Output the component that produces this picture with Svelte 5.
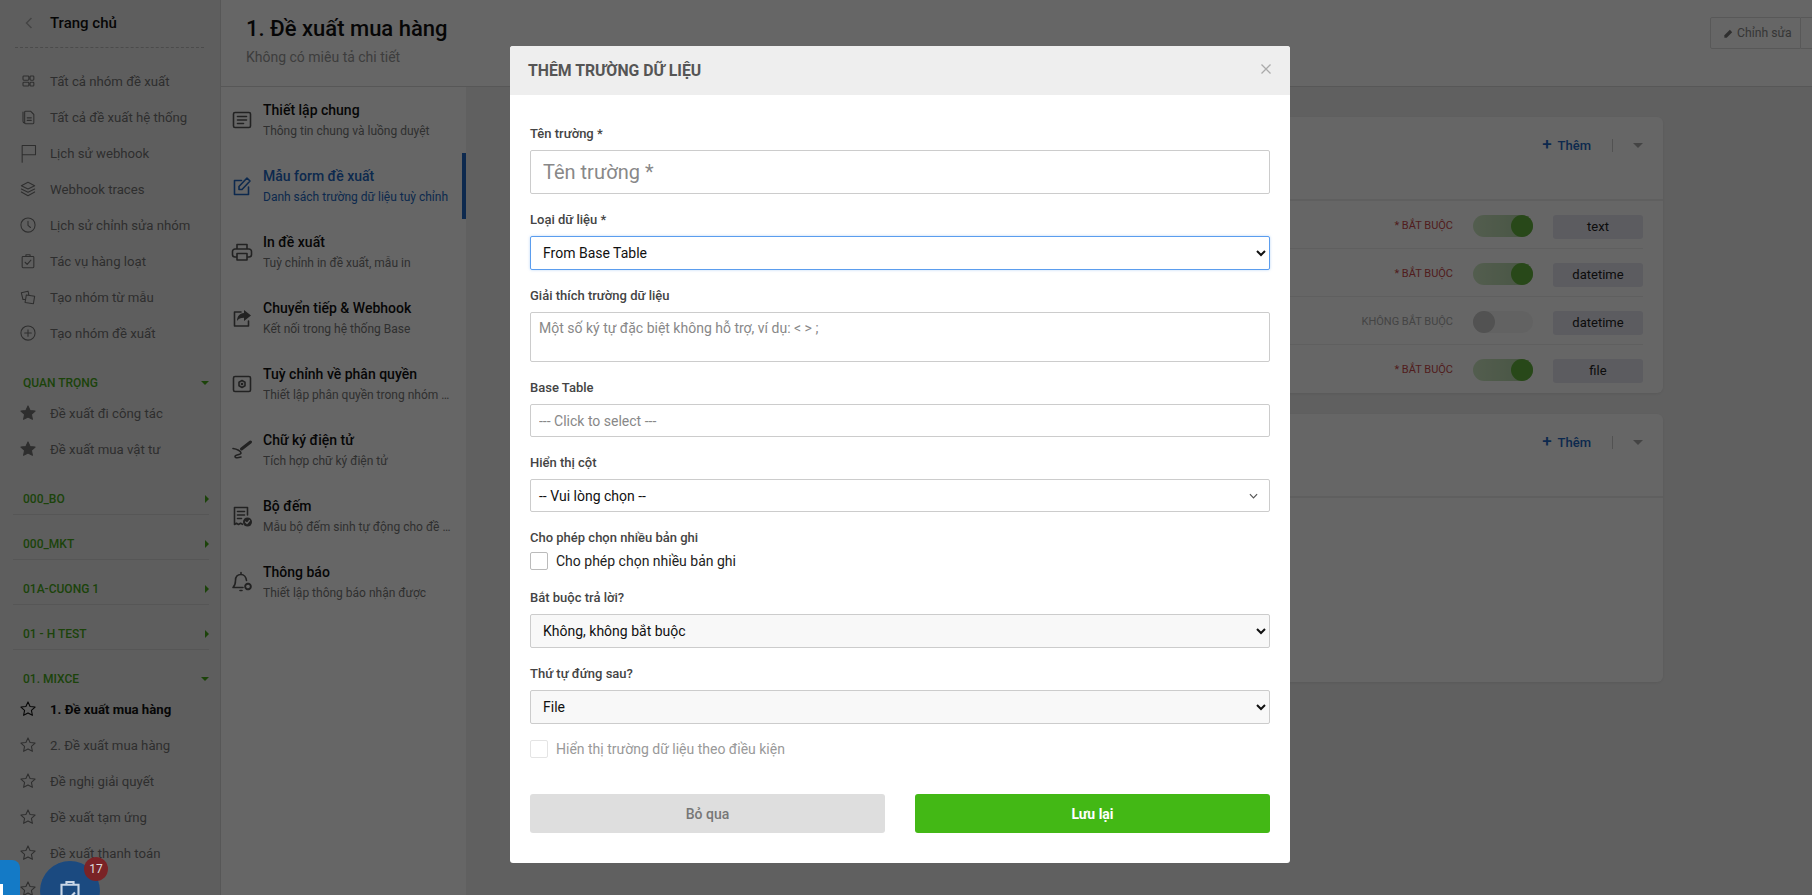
<script>
  const icons = {
    grid: ['M7 6h5a1 1 0 0 1 1 1v3a1 1 0 0 1-1 1H7a1 1 0 0 1-1-1V7a1 1 0 0 1 1-1zM7 13.5h5a1 1 0 0 1 1 1V17a1 1 0 0 1-1 1H7a1 1 0 0 1-1-1v-2.500a1 1 0 0 1 1-1zM15.500 6H18a1 1 0 0 1 1 1v3a1 1 0 0 1-1 1h-2.500a1 1 0 0 1-1-1V7a1 1 0 0 1 1-1zM15.500 13.500H18a1 1 0 0 1 1 1V17a1 1 0 0 1-1 1h-2.500a1 1 0 0 1-1-1v-2.500a1 1 0 0 1 1-1z'],
    copy: ['M6 6v11c0 1 .6 2 2 2', 'M9 5h6l4 4v10a1 1 0 0 1-1 1H9a1 1 0 0 1-1-1V6a1 1 0 0 1 1-1zM11 13h5M11 16h5'],
    flag: ['M5 23V3h16v11H5'],
    layers: ['M12 4l8 4-8 4-8-4zM4 12l8 4 8-4M4 15.500l8 4.500 8-4.500'],
    clock: ['M12 3.500a8.500 8.500 0 1 1 0 17 8.500 8.500 0 0 1 0-17zM12 7.500v5l3 2.500'],
    task: ['M6 6.500h12a1 1 0 0 1 1 1V19a1 1 0 0 1-1 1H6a1 1 0 0 1-1-1V7.500a1 1 0 0 1 1-1zM9.500 6.500V4.500h5v2M8.500 13.500l2.500 2.500 4.500-5'],
    tpl: ['M4 7l8-2 1 4M6 15L4 7M6 15h2.500M10 9.500l10 1.500-1.500 9-10-1.500z'],
    plus: ['M12 3.500a8.500 8.500 0 1 1 0 17 8.500 8.500 0 0 1 0-17zM12 8v8M8 12h8'],
    star: ['M12 3.500l2.500 5.500 6 .700-4.400 4 1.200 5.900L12 16.700l-5.300 2.900 1.200-5.900-4.400-4 6-.700z'],
    article: ['M5 4.500h14a1.500 1.500 0 0 1 1.500 1.500v12a1.500 1.500 0 0 1-1.500 1.500H5A1.500 1.500 0 0 1 3.500 18V6A1.500 1.500 0 0 1 5 4.500zM7.500 8.500h9M7.500 12h9M7.500 15.500h6'],
    edit: ['M11.500 6.500H4.500v14h14v-7.500', 'M9 15.500v-3l8-8.500 3 3-8 8.500z'],
    print: ['M7 9V4.500h10V9M7 17H5a2.500 2.500 0 0 1-2.500-2.500v-3A2.500 2.500 0 0 1 5 9h14a2.500 2.500 0 0 1 2.500 2.500v3A2.500 2.500 0 0 1 19 17h-2M7 13.500h10V20H7z'],
    box: ['M5 4.500h14a1.500 1.500 0 0 1 1.500 1.500v12a1.500 1.500 0 0 1-1.500 1.500H5A1.500 1.500 0 0 1 3.500 18V6A1.500 1.500 0 0 1 5 4.500z', 'M12 8.500l3 1.700v3.600l-3 1.700-3-1.700v-3.600z'],
    sign: ['M3 10.500c4 .5 8 2.500 8 4.500s-6 1.500-6 3.500 4 1 6 .5'],
    count: ['M4.500 3.500h13V11M4.500 3.500v17l2-1.200 2 1.200 2-1.200 2 1M7.500 7.500h7M7.500 11h7M7.500 14.500h4'],
    bell: ['M11 2.500v2M11 4.500c-3.500 0-5.500 2.500-5.500 6 0 3.500-1 5.500-2.500 7h10M16.500 10.500c-.4-3-2.500-6-5.500-6M10 20.500h2']
  };
  const mainItems = [
    ['grid', 'Tất cả nhóm đề xuất'], ['copy', 'Tất cả đề xuất hệ thống'], ['flag', 'Lịch sử webhook'],
    ['layers', 'Webhook traces'], ['clock', 'Lịch sử chỉnh sửa nhóm'], ['task', 'Tác vụ hàng loạt'],
    ['tpl', 'Tạo nhóm từ mẫu'], ['plus', 'Tạo nhóm đề xuất']
  ];
  const mixce = ['1. Đề xuất mua hàng', '2. Đề xuất mua hàng', 'Đề nghị giải quyết', 'Đề xuất tạm ứng', 'Đề xuất thanh toán', 'Đề xuất'];
  const nav = [
    ['article', 'Thiết lập chung', 'Thông tin chung và luồng duyệt'],
    ['edit', 'Mẫu form đề xuất', 'Danh sách trường dữ liệu tuỳ chỉnh'],
    ['print', 'In đề xuất', 'Tuỳ chỉnh in đề xuất, mẫu in'],
    ['share', 'Chuyển tiếp & Webhook', 'Kết nối trong hệ thống Base'],
    ['box', 'Tuỳ chỉnh về phân quyền', 'Thiết lập phân quyền trong nhóm đề xuất'],
    ['sign', 'Chữ ký điện tử', 'Tích hợp chữ ký điện tử'],
    ['count', 'Bộ đếm', 'Mẫu bộ đếm sinh tự động cho đề xuất'],
    ['bell', 'Thông báo', 'Thiết lập thông báo nhận được']
  ];
  const rows = [
    ['* Bắt buộc', true, 'text'], ['* Bắt buộc', true, 'datetime'],
    ['Không bắt buộc', false, 'datetime'], ['* Bắt buộc', true, 'file']
  ];
  const closed = ['000_BO', '000_MKT', '01A-CUONG 1', '01 - H TEST'];
</script>

{#snippet icon(name, cls = '')}
  <svg class="ic {cls}" viewBox="0 0 24 24" aria-hidden="true">
    {#if name === 'share'}
      <path d="M11 6H4.500v14h14v-5" />
      <path class="solid" d="M14 4l7 5.500-7 5.500v-3.300c-3.500 0-5.500 1-7 3.300 0-4.500 2.500-7.500 7-8z" />
    {:else}
      {#each icons[name] as d}<path {d} />{/each}
      {#if name === 'box'}<circle class="solid" cx="12" cy="12" r="1.300" />{/if}
      {#if name === 'sign'}<path class="thick" d="M20.500 4l-9 7" />{/if}
      {#if name === 'count'}<circle class="solid" cx="17.500" cy="18" r="4.500" /><path class="hole" d="M15.500 18l1.500 1.500 2.500-3" />{/if}
      {#if name === 'bell'}<circle class="gear" cx="18" cy="16.500" r="2.800" />{/if}
    {/if}
  </svg>
{/snippet}

{#snippet caret(dir)}
  <span class="caret {dir}"></span>
{/snippet}

<div class="page">
  <aside class="sidebar">
    <div class="home">
      <svg class="back" viewBox="0 0 10 14"><path d="M7.500 2L2.500 7l5 5" /></svg>
      <span>Trang chủ</span>
    </div>
    <ul class="items main">
      {#each mainItems as [ic, label]}
        <li>{@render icon(ic)}<span>{label}</span></li>
      {/each}
    </ul>

    <div class="group open">QUAN TRỌNG {@render caret('down')}</div>
    <ul class="items">
      <li>{@render icon('star', 'filled')}<span>Đề xuất đi công tác</span></li>
      <li>{@render icon('star', 'filled')}<span>Đề xuất mua vật tư</span></li>
    </ul>

    {#each closed as name}
      <div class="group shut">{name} {@render caret('right')}</div>
    {/each}

    <div class="group open">01. MIXCE {@render caret('down')}</div>
    <ul class="items">
      {#each mixce as label, i}
        <li class:current={i === 0}>{@render icon('star')}<span>{label}</span></li>
      {/each}
    </ul>
  </aside>

  <div class="workspace">
    <header class="head">
      <div>
        <h1>1. Đề xuất mua hàng</h1>
        <p>Không có miêu tả chi tiết</p>
      </div>
      <div class="head-actions">
        <button class="edit-btn">
          <svg viewBox="0 0 24 24"><path d="M3 21v-5L15 4l5 5L8 21z" /></svg>
          Chỉnh sửa
        </button>
        <span class="more-btn"></span>
      </div>
    </header>
    <div class="split">
      <nav class="subnav">
        {#each nav as [ic, title, sub], i}
          <div class="nav-item" class:active={i === 1}>
            {@render icon(ic, 'large')}
            <div class="nav-text">
              <strong>{title}</strong>
              <small>{sub}</small>
            </div>
          </div>
        {/each}
      </nav>
      <main class="content">
        <section class="card">
          <div class="card-top">
            <span class="add"><b>+</b> Thêm</span>
            <i class="sep"></i>
            <span class="caret-grey"></span>
          </div>
          {#each rows as [req, on, type]}
            <div class="row">
              <span class="req" class:off={!on}>{req}</span>
              <span class="toggle" class:on><span></span></span>
              <span class="chip">{type}</span>
            </div>
          {/each}
        </section>
        <section class="card second">
          <div class="card-top">
            <span class="add"><b>+</b> Thêm</span>
            <i class="sep"></i>
            <span class="caret-grey"></span>
          </div>
        </section>
      </main>
    </div>
  </div>
</div>

<div class="overlay"></div>

<div class="fab-left"></div>
<div class="fab">
  <svg viewBox="0 0 24 24"><path d="M6 5.500h12v15H6zM9.500 5.500V3.500h5v2M9 13l2.300 2.300L15.500 11" /></svg>
  <span class="badge">17</span>
</div>

<div class="modal" role="dialog">
  <div class="modal-head">
    <h2>Thêm trường dữ liệu</h2>
    <svg class="close" viewBox="0 0 12 12"><path d="M1.500 1.500l9 9M10.500 1.500l-9 9" /></svg>
  </div>
  <form class="modal-body">
    <label class="field">
      <span class="lbl">Tên trường *</span>
      <input class="ctl big" placeholder="Tên trường *" />
    </label>
    <label class="field">
      <span class="lbl">Loại dữ liệu *</span>
      <select class="ctl sel focus"><option>From Base Table</option></select>
    </label>
    <label class="field">
      <span class="lbl">Giải thích trường dữ liệu</span>
      <textarea class="ctl area" placeholder="Một số ký tự đặc biệt không hỗ trợ, ví dụ: < > ;"></textarea>
    </label>
    <label class="field">
      <span class="lbl">Base Table</span>
      <input class="ctl small" placeholder="--- Click to select ---" />
    </label>
    <div class="field">
      <span class="lbl">Hiển thị cột</span>
      <div class="ctl small pick">
        <span>-- Vui lòng chọn --</span>
        <svg viewBox="0 0 10 6"><path d="M1 1l4 4 4-4" /></svg>
      </div>
    </div>
    <div class="field with-check">
      <span class="lbl tight">Cho phép chọn nhiều bản ghi</span>
      <label class="check"><input type="checkbox" /><span>Cho phép chọn nhiều bản ghi</span></label>
    </div>
    <label class="field">
      <span class="lbl">Bắt buộc trả lời?</span>
      <select class="ctl sel grey"><option>Không, không bắt buộc</option></select>
    </label>
    <label class="field">
      <span class="lbl">Thứ tự đứng sau?</span>
      <select class="ctl sel grey"><option>File</option></select>
    </label>
    <label class="check disabled"><input type="checkbox" disabled /><span>Hiển thị trường dữ liệu theo điều kiện</span></label>
    <div class="actions">
      <button type="button" class="btn cancel">Bỏ qua</button>
      <button type="button" class="btn save">Lưu lại</button>
    </div>
  </form>
</div>

<style>
  :global(html), :global(body) { margin: 0; height: 100%; overflow: hidden; }
  :global(body) { font-family: Roboto, "Noto Sans", sans-serif; background: #f0f0f0; }
  * { box-sizing: border-box; }

  .page { display: flex; width: 1812px; height: 895px; overflow: hidden; }

  /* sidebar */
  .sidebar { width: 221px; flex: none; height: 895px; overflow: hidden; background: #ececec; border-right: 1px solid #d9d9d9; }
  .home { display: flex; align-items: center; height: 48px; margin: 0 16px 0 15px; border-bottom: 1px dashed #bbb; color: #111; font-size: 15px; font-weight: 500; padding-bottom: 2px; }
  .back { width: 10px; height: 14px; margin: 0 16px 0 9px; fill: none; stroke: #aaa; stroke-width: 1.500; }
  .items { list-style: none; margin: 0 0 3px; padding: 0; }
  .items.main { margin: 15px 0 3px; }
  .items li { display: flex; align-items: center; height: 36px; padding-left: 18px; color: #747474; font-size: 13.200px; }
  .items li span { margin-left: 12px; white-space: nowrap; }
  .items li.current { color: #111; font-weight: 700; }
  .ic { width: 20px; height: 20px; flex: none; fill: none; stroke: currentColor; stroke-width: 1.300; stroke-linejoin: round; stroke-linecap: round; }
  .ic.filled { fill: currentColor; }
  .ic.large { width: 24px; height: 24px; stroke-width: 1.600; }
  .solid { fill: currentColor; stroke: none; }
  .thick { stroke-width: 3; }
  .hole { stroke: #fff; stroke-width: 1.200; }
  .gear { stroke-width: 2; stroke-dasharray: 1.500 .7; }
  .group { position: relative; margin: 0 11px 0 13px; padding: 19px 0 2px 10px; line-height: 20px; font-size: 12px; font-weight: 500; color: #46a81a; }
  .group.shut { padding-bottom: 5px; border-bottom: 1px solid #d8d8d8; height: 45px; }
  .caret { position: absolute; width: 0; height: 0; }
  .caret.down { right: 0; top: 27px; border: 4px solid transparent; border-top: 4px solid #46a81a; border-bottom: 0; }
  .caret.right { right: 0; top: 25px; border: 4px solid transparent; border-left: 4px solid #46a81a; border-right: 0; }

  /* main */
  .workspace { flex: 1; display: flex; flex-direction: column; min-width: 0; }
  .head { display: flex; justify-content: space-between; height: 87px; flex: none; padding-left: 25px; background: #fff; border-bottom: 1px solid #d9d9d9; }
  h1 { margin: 14px 0 0; font-size: 22px; line-height: 30px; font-weight: 500; color: #111; }
  .head p { margin: 3px 0 0; font-size: 14px; line-height: 20px; color: #999; }
  .head-actions { display: flex; margin-top: 17px; height: 32px; }
  .edit-btn { display: flex; align-items: center; gap: 3px; width: 91px; height: 32px; padding: 0 0 0 12px; border: 1px solid #ddd; border-radius: 2px 0 0 2px; background: #fff; color: #888; font: 12.200px Roboto, sans-serif; }
  .edit-btn svg { width: 11px; height: 11px; fill: #777; }
  .more-btn { width: 11px; height: 32px; border: 1px solid #ddd; border-width: 1px 0 1px 0; }
  .split { flex: 1; display: flex; min-height: 0; }
  .subnav { width: 245px; flex: none; background: #fff; }
  .nav-item { display: flex; align-items: center; height: 66px; padding-left: 9px; color: #555; border-right: 4px solid transparent; }
  .nav-item.active { color: #2268c2; border-right-color: #2268c2; }
  .nav-text { margin-left: 9px; min-width: 0; width: 189px; padding-top: 1px; }
  .nav-text strong { display: block; font-size: 14px; line-height: 20px; font-weight: 500; color: #111; }
  .nav-text small { display: block; margin-top: 1px; font-size: 12px; line-height: 20px; color: #777; white-space: nowrap; overflow: hidden; text-overflow: ellipsis; }
  .nav-item.active strong, .nav-item.active small { color: #2268c2; }
  .content { flex: 1; padding: 30px 149px 0 60px; background: #f0f0f0; }
  .card { background: #fff; border-radius: 6px; box-shadow: 0 1px 3px rgba(0,0,0,.08); margin-bottom: 21px; }
  .card.second { height: 268px; }
  .card-top { display: flex; align-items: center; justify-content: flex-end; height: 84px; padding: 0 20px 26px 0; border-bottom: 2px solid #eee; }
  .add { color: #2268c2; font-size: 13px; font-weight: 500; }
  .add b { font-size: 17px; font-weight: 500; margin-right: 3px; line-height: 14px; }
  .sep { width: 1px; height: 13px; background: #ccc; margin: 0 20px 0 21px; }
  .caret-grey { width: 0; height: 0; border: 5px solid transparent; border-top: 5px solid #aaa; border-bottom: 0; }
  .row { display: flex; align-items: flex-start; justify-content: flex-end; height: 48px; margin-right: 20px; border-bottom: 1px solid #eee; padding-top: 14px; }
  .row:last-child { border-bottom: 0; }
  .req { font-size: 11px; line-height: 22px; text-transform: uppercase; color: #c94a4a; }
  .req.off { color: #aaa; }
  .toggle { display: block; width: 60px; height: 22px; margin: 0 20px; border-radius: 11px; background: #f6f6f6; }
  .toggle span { display: block; width: 22px; height: 22px; border-radius: 50%; background: #ccc; }
  .toggle.on { background: linear-gradient(90deg, #cfe9c4, #b4d4a8); display: flex; justify-content: flex-end; }
  .toggle.on span { background: #65b43f; }
  .chip { width: 90px; height: 24px; border-radius: 3px; background: #e6e6f0; color: #222; text-align: center; font-size: 13px; line-height: 24px; }

  .overlay { position: fixed; inset: 0; background: rgba(0,0,0,.6); }

  /* floating, drawn above the dimmed page in the reference's tones */
  .fab-left { position: fixed; left: 0; top: 860px; width: 20px; height: 60px; background: #147ac6; border-radius: 0 8px 0 0; }
  .fab-left::after { content: ""; position: absolute; left: 0; top: 24px; width: 3px; height: 12px; background: #fff; }
  .fab { position: fixed; left: 40px; top: 861px; width: 60px; height: 60px; border-radius: 50%; background: #1b4a80; }
  .fab svg { position: absolute; left: 13px; top: 16px; width: 34px; height: 34px; fill: none; stroke: #c9d6e6; stroke-width: 1.500; }
  .badge { position: absolute; left: 44px; top: -4px; width: 24px; height: 24px; border-radius: 50%; background: #7a2326; color: #ddd; font-size: 12px; line-height: 24px; text-align: center; }

  /* modal */
  .modal { position: fixed; left: 510px; top: 46px; width: 780px; height: 817px; background: #fff; border-radius: 3px; overflow: hidden; }
  .modal-head { display: flex; align-items: center; justify-content: space-between; height: 49px; padding: 0 18px 0 18px; background: #eee; }
  h2 { margin: 0; font-size: 15.800px; font-weight: 700; color: #555; text-transform: uppercase; }
  .close { width: 12px; height: 12px; fill: none; stroke: #aaa; stroke-width: 1.300; margin-top: -3px; }
  .modal-body { padding: 29px 20px 0; }
  .field { display: block; margin-bottom: 16px; }
  .field.with-check { margin-bottom: 18px; }
  .lbl { display: block; height: 20px; margin-bottom: 6px; font-size: 13px; line-height: 20px; font-weight: 500; color: #444; }
  .lbl.tight { margin-bottom: 4px; }
  .ctl { display: block; width: 100%; margin: 0; border: 1px solid #ccc; border-radius: 2px; outline: 0; background: #fff; color: #111; font-family: Roboto, sans-serif; font-size: 14px; }
  input.ctl::placeholder, textarea.ctl::placeholder { color: #888; opacity: 1; }
  .big { height: 44px; padding: 0 12px; font-size: 20px; }
  .sel { height: 34px; padding: 0 8px; }
  .sel.focus { border-color: #5b9dee; box-shadow: 0 0 3px rgba(91,157,238,.4); }
  .sel.grey { background: #f8f8f8; }
  .area { height: 50px; padding: 7px 8px; resize: none; }
  .small { height: 33px; padding: 0 8px; }
  .pick { display: flex; align-items: center; justify-content: space-between; padding-right: 11px; }
  .pick svg { width: 9px; height: 6px; fill: none; stroke: #555; stroke-width: 1.300; }
  .check { display: flex; align-items: center; height: 18px; font-size: 14px; color: #222; margin-bottom: 17px; }
  .field .check { margin-bottom: 0; }
  .check input { appearance: none; width: 18px; height: 18px; margin: 0 8px 0 0; border: 1px solid #bbb; border-radius: 2px; background: #fff; }
  .check.disabled { color: #999; }
  .check.disabled input { border-color: #e4e4e4; }
  .actions { display: flex; gap: 30px; margin-top: 36px; }
  .btn { flex: 1; height: 39px; border: 0; border-radius: 3px; font-family: Roboto, sans-serif; font-size: 14px; }
  .cancel { background: #dedede; color: #777; font-weight: 500; }
  .save { background: #43b815; color: #fff; font-weight: 700; }
</style>
